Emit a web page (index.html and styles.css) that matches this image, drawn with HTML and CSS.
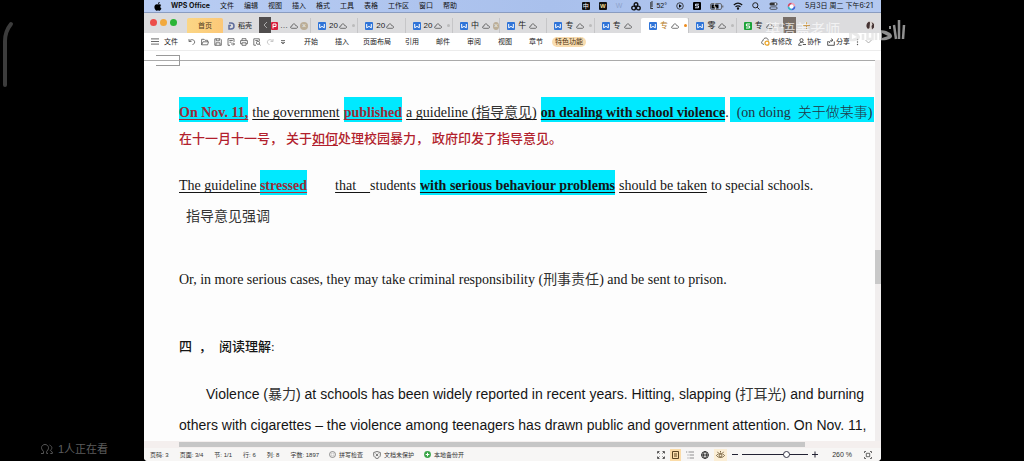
FILE: index.html
```html
<!DOCTYPE html>
<html lang="zh-CN">
<head>
<meta charset="utf-8">
<title>WPS Office</title>
<link rel="stylesheet" href="styles.css">
</head>
<body>
<svg class="defs" aria-hidden="true">
  <symbol id="w" viewBox="0 0 8 8"><rect width="8" height="8" rx="1" fill="#2f74d8"/><path d="M1.7 2v3.8L4 4.4l2.3 1.4V2" fill="none" stroke="#fff"/></symbol>
  <symbol id="s" viewBox="0 0 8 8"><rect width="8" height="8" rx="1" fill="#1aa237"/><path d="M6 2H2.4v2h3.2v2H2" fill="none" stroke="#fff"/></symbol>
  <symbol id="cloud" viewBox="0 0 8 6"><path d="M1.8 5.3C-.2 5.2.2 3 2 3.2 2.200.2 5.400 .2 5.700 2.700 8.200 2.700 8 5.300 6.300 5.300Z" fill="none" stroke="#555" stroke-width=".8"/></symbol>
</svg>
<div class="stage">
  <aside class="side">
    <svg class="arc" viewBox="0 0 14 68" aria-hidden="true"><path d="M11 3C7 8 5 14 5 20V64" fill="none" stroke="#3c3c3c" stroke-width="4" stroke-linecap="round"/></svg>
    <p class="viewers"><svg width="14" height="12" viewBox="0 0 14 12" fill="none" stroke="#555" aria-hidden="true"><path d="M1 10.500h2.500V8.300C-.3 5 2 1.500 5 1.500s5.300 3.500 1.700 6.800v2.200H8M9.500 2c3 1.500 3 3.500.8 5.500l2 1.500v1.500h-2"/></svg>1人正在看</p>
  </aside>

  <main class="window">
    <nav class="menubar">
      <svg class="apple" width="8" height="9" viewBox="0 0 8 9" aria-hidden="true"><path d="M5.800 0C4.500.2 3.900 1 4 2 5.100 1.900 5.800 1 5.800 0ZM4 2.500C3 2 1.900 2 1.100 2.900-.3 4.600.6 7.400 2 8.500c.8.5 1.300 0 2 0s1.200.5 2 0c.7-.5 1.200-1.300 1.500-2C6 5.800 6 3.800 7.200 3.100 6.400 2 5 2 4 2.500Z"/></svg>
      <button class="app">WPS Office</button>
      <button>文件</button><button>编辑</button><button>视图</button><button>插入</button><button>格式</button><button>工具</button><button>表格</button><button>工作区</button><button>窗口</button><button>帮助</button>
      <div class="tray">
        <span class="badge">中</span>
        <span class="badge gold">W</span>
        <span class="faint">W</span>
        <svg width="10" height="9" viewBox="0 0 10 9" fill="none" stroke="#111" stroke-width="1.400"><circle cx="5" cy="2.600" r="1.800"/><circle cx="2.700" cy="6" r="1.900"/><circle cx="7.300" cy="6" r="1.900"/></svg>
        <span class="temp"><svg width="4" height="9" viewBox="0 0 4 9" fill="none" stroke="#333"><path d="M1 1h2M1 3h2M1 5h2M1 7.500h2M.8 1v7"/></svg>52°</span>
        <svg width="8" height="8" viewBox="0 0 8 8"><circle cx="4" cy="4" r="3.300" fill="none" stroke="#222" stroke-width=".8"/><path d="M3 2.300 5.800 4 3 5.700Z"/></svg>
        <svg width="8" height="8" viewBox="0 0 8 8"><rect width="8" height="8" rx="1"/><path d="M6 2.200H2.500v1.700h3v1.900H2" fill="none" stroke="#dce6fa"/></svg>
        <svg width="14" height="7" viewBox="0 0 14 7"><rect x=".5" y=".5" width="11" height="6" rx="1.500" fill="none" stroke="#555" stroke-width=".8"/><rect x="1.500" y="1.500" width="7" height="4"/><path d="M5 0 4 4h2L5 7" fill="none" stroke="#fff" stroke-width=".7"/><path d="M12.800 2.500v2" stroke="#555"/></svg>
        <svg width="10" height="8" viewBox="0 0 10 8" fill="none" stroke="#111" stroke-width="1.200"><path d="M.8 3C3.500.5 6.500.5 9.200 3M2.500 4.800c1.800-1.500 3.200-1.500 5 0"/><circle cx="5" cy="6.500" r=".6"/></svg>
        <svg width="8" height="8" viewBox="0 0 8 8" fill="none" stroke="#222"><circle cx="3.300" cy="3.300" r="2.600"/><path d="M5.200 5.200 7.500 7.500"/></svg>
        <svg width="9" height="8" viewBox="0 0 9 8"><rect x=".5" y=".5" width="8" height="3" rx="1.500" fill="#333"/><circle cx="6.500" cy="2" r="1" fill="#dce6fa"/><rect x=".9" y="4.900" width="7.200" height="2.400" rx="1.200" fill="none" stroke="#333" stroke-width=".8"/></svg>
        <svg width="9" height="9" viewBox="0 0 9 9" fill="none" stroke-width="1.600"><path d="M4.500 1.500a3 3 0 0 1 3 3" stroke="#f5a0b0"/><path d="M7.500 4.500a3 3 0 0 1-3 3" stroke="#3b62d8"/><path d="M4.500 7.500a3 3 0 0 1-3-3" stroke="#31b8c2"/><path d="M1.500 4.500a3 3 0 0 1 3-3" stroke="#d9415d"/><circle cx="4.500" cy="4.500" r="2" fill="#fff" stroke="none"/></svg>
        <time>5月3日 周二 下午6:21</time>
      </div>
    </nav>

    <div class="tabs">
      <div class="lights"><i class="close-light"></i><i class="min-light"></i><i class="max-light"></i></div>
      <button class="home">首页</button>
      <button class="docer"><svg width="7" height="8" viewBox="0 0 7 8" fill="none" stroke="#5f6c9c" stroke-width="1.500"><path d="M1 1h2c4 0 4 6 0 6H1V3.500h2"/></svg>稻壳</button>
      <button class="back" aria-label="向左滚动"><svg width="5" height="8" viewBox="0 0 5 8" fill="none" stroke="#aaa"><path d="M4 1 1 4l3 3"/></svg></button>
      <button class="pdf"><svg width="7" height="8" viewBox="0 0 7 8"><rect width="7" height="8" rx="1" fill="#d9203e"/><path d="M2 6.500V2h3v2.500H2" fill="none" stroke="#fff"/></svg>…<svg class="cl"><use href="#cloud"/></svg><i class="close">×</i></button>
      <div class="strip">
        <button><svg class="ic"><use href="#w"/></svg>20<svg class="cl near"><use href="#cloud"/></svg><i class="dot"></i></button>
        <button><svg class="ic"><use href="#w"/></svg>20<svg class="cl near"><use href="#cloud"/></svg></button>
        <button><svg class="ic"><use href="#w"/></svg>20<svg class="cl near"><use href="#cloud"/></svg><i class="dot"></i></button>
        <button><svg class="ic"><use href="#w"/></svg>中<svg class="cl"><use href="#cloud"/></svg><i class="close">×</i></button>
        <button><svg class="ic"><use href="#w"/></svg>牛<svg class="cl"><use href="#cloud"/></svg></button>
        <button><svg class="ic"><use href="#w"/></svg>专<svg class="cl"><use href="#cloud"/></svg><i class="dot"></i></button>
        <button><svg class="ic"><use href="#w"/></svg>专<svg class="cl"><use href="#cloud"/></svg></button>
        <button class="active"><svg class="ic"><use href="#w"/></svg>专<svg class="cl"><use href="#cloud"/></svg><i class="dot"></i></button>
        <button><svg class="ic"><use href="#w"/></svg>零<svg class="cl"><use href="#cloud"/></svg><i class="dot"></i></button>
        <button><svg class="ic"><use href="#s"/></svg>专<svg class="cl"><use href="#cloud"/></svg><i class="dot"></i></button>
      </div>
      <button class="next" aria-label="向右滚动"><svg width="5" height="8" viewBox="0 0 5 8" fill="none" stroke="#a98c5c"><path d="m1 1 3 3-3 3"/></svg></button>
      <button class="plus" aria-label="新建"><svg width="7" height="7" viewBox="0 0 7 7" stroke="#c99b53"><path d="M3.500 0v7M0 3.500h7"/></svg></button>
      <svg class="avatar" width="9" height="9" viewBox="0 0 9 9"><circle cx="4.500" cy="4.500" r="4.300" fill="#ddd6d2"/><path d="M1 2.500C2.500.3 4 .5 4 2L3.500 7 2 8C.3 6.500 0 4.500 1 2.500ZM5.500 1 8 3v3.500L6 8.500 5.500 5l1-1.500Z" fill="#433"/></svg>
    </div>

    <div class="toolbar">
      <button class="file"><svg width="8" height="7" viewBox="0 0 8 7" stroke="#444" stroke-width=".8"><path d="M0 .9h8M0 3.500h8M0 6.100h8"/></svg>文件</button>
      <div class="quick">
        <svg viewBox="0 0 8 8"><path d="M1 1v2.500h2.500M1.200 3.200C3 .5 7.500 1.500 6.500 5L4.500 7"/></svg>
        <svg viewBox="0 0 8 8"><path d="M.6 6.800V1.300h2.500l1 1h2.500v1.500M.6 6.800 2 3.800h5.500L6.600 6.800Z"/></svg>
        <svg viewBox="0 0 8 8"><path d="M.8.8h5.500l1 1v5.500H.8ZM2.300.8v2h3v-2M2 7.200V4.800h4v2.400"/></svg>
        <svg viewBox="0 0 8 8"><path d="M7 4V.7H1v6.600h2M2.300 2.500h3.500M2.500 4.200h2M4 6h3.500M6 4.500 7.500 6 6 7.500"/></svg>
        <svg viewBox="0 0 8 8"><path d="M2 2.500V.7h4v1.800M2 5.800H.6V2.600h6.800v3.200H6M2 4.800h4v2.500H2Z"/></svg>
        <svg viewBox="0 0 8 8"><path d="M3 7.200H.8V.8h5.500V3M2.300 2.500h2.500"/><circle cx="5" cy="4.800" r="1.600"/><path d="m6.200 6 1.400 1.500"/></svg>
        <svg class="off" viewBox="0 0 8 8"><path d="M7 1v2.500H4.500M6.800 3.200C5 .5.500 1.500 1.500 5l2 2"/></svg>
        <svg viewBox="0 0 8 8"><path d="M2 2.500h4M2.200 4.300 4 6l1.800-1.700Z"/></svg>
      </div>
      <div class="ribbon"><button>开始</button><button>插入</button><button class="wide">页面布局</button><button>引用</button><button>邮件</button><button>审阅</button><button>视图</button><button>章节</button></div>
      <button class="pill">特色功能</button>
      <div class="actions">
        <button><svg width="9" height="9" viewBox="0 0 9 9" fill="none" stroke="#444" stroke-width=".8"><path d="M3 7.500C-.2 7 .2 4 2 3.800 2.500 0 7 .2 7.300 3.500"/><circle cx="6" cy="6.200" r="2" fill="#fff" stroke="#e8a020" stroke-width="1.200"/></svg>有修改</button>
        <button><svg width="8" height="8" viewBox="0 0 8 8" fill="none" stroke="#444" stroke-width=".9"><circle cx="3.500" cy="2.200" r="1.600"/><path d="M.6 7.300C.8 4 5 3.500 5.800 5M.6 7.300h3M4.800 6.500H8"/></svg>协作</button>
        <button><svg width="8" height="8" viewBox="0 0 8 8" fill="none" stroke="#444" stroke-width=".9"><path d="M1.700 3.500H.7v3.800h6.600V3.500M2.500 5C2.500 3 3.500 2.200 5.500 2.200M4.300.7 6 2.200 4.300 3.700"/></svg>分享</button>
        <button aria-label="更多"><svg width="3" height="8" viewBox="0 0 3 8" fill="#555"><circle cx="1.500" cy="1.500" r=".7"/><circle cx="1.500" cy="4" r=".7"/><circle cx="1.500" cy="6.500" r=".7"/></svg></button>
        <button aria-label="收起"><svg width="7" height="5" viewBox="0 0 7 5" fill="none" stroke="#999" stroke-width=".8"><path d="m.5 1 3 3 3-3"/></svg></button>
      </div>
    </div>

    <div class="margin-strip"><i></i></div>

    <div class="body">
      <article class="doc">
        <p class="line tall"><b class="hl red u">On Nov. 11,</b><span class="u">the government</span><b class="hl red u">published</b><span class="u">a guideline (<span class="cjk">指导意见</span>)</span><span class="pair"><b class="hl u">on dealing with school violence</b>.</span><span class="hl note"><span>(on doing</span><span>关于做某事)</span></span></p>
        <p class="line zh"><span>在十一月十一号，</span><span>关于<span class="u">如何</span>处理校园暴力，</span><span>政府印发了指导意见。</span></p>
        <p class="line tall second"><span class="pair"><span class="u">The guideline </span><b class="hl red u ured">stressed</b></span><span class="that"><span class="u">that &nbsp; &nbsp;</span>students</span><b class="hl u">with serious behaviour problems</b><span class="u">should be taken</span><span>to special schools.</span></p>
        <p class="line emph cjk">指导意见强调</p>
        <p class="line or">Or, in more serious cases, they may take criminal responsibility (<span class="cjk">刑事责任</span>) and be sent to prison.</p>
        <h2 class="line"><span>四</span><span>，</span><span>阅读理解:</span></h2>
        <div class="passage">
          <p class="indent">Violence (<span class="cjk">暴力</span>) at schools has been widely reported in recent years. Hitting, slapping (<span class="cjk">打耳光</span>) and burning</p>
          <p>others with cigarettes – the violence among teenagers has drawn public and government attention. On Nov. 11,</p>
        </div>
      </article>
      <div class="vscroll"><i></i></div>
    </div>

    <div class="hscroll"><i></i></div>

    <footer class="status">
      <div class="facts"><span>页码: 3</span><span>页面: 3/4</span><span>节: 1/1</span><span>行: 6</span><span>列: 8</span><span>字数: 1897</span></div>
      <div class="checks">
        <span><svg width="7" height="7" viewBox="0 0 7 7" fill="none" stroke="#777" stroke-width=".8"><circle cx="3.500" cy="3.500" r="3"/><circle cx="3.500" cy="3.500" r="1.500" stroke="#bbb"/></svg>拼写检查</span>
        <span><svg width="8" height="8" viewBox="0 0 8 8" fill="none" stroke="#555" stroke-width=".8"><path d="M4 .5 7.300 1.500v3C7 6 5.500 7 4 7.600 2.500 7 1 6 .7 4.500v-3ZM2.700 2.500l2.600 2.800M5.300 2.500 2.700 5.300"/></svg>文档未保护</span>
        <span><svg width="7" height="7" viewBox="0 0 7 7"><circle cx="3.500" cy="3.500" r="3.400" fill="#3aa548"/><path d="M3.500 1.700v3.600M1.700 3.500h3.600" stroke="#fff"/></svg>本地备份开</span>
      </div>
      <div class="views">
        <button aria-label="全屏"><svg width="8" height="8" viewBox="0 0 8 8" fill="none" stroke="#333"><path d="M.5 2.500v-2h2M5.500.5h2v2M7.500 5.500v2h-2M2.500 7.500h-2v-2M1 1l1.500 1.500M7 1 5.500 2.500M1 7l1.500-1.500M7 7 5.500 5.500" stroke-width=".8"/></svg></button>
        <button class="on" aria-label="页面视图"><svg width="7" height="8" viewBox="0 0 7 8" fill="none" stroke="#5b4420"><path d="M.5.5h6v7h-6ZM2 3h3M2 5h3"/></svg></button>
        <button aria-label="大纲"><svg width="8" height="8" viewBox="0 0 8 8" stroke="#777" stroke-width=".8"><path d="M0 1h1.200M2.500 1H8M1.500 4h1M3.500 4H8M1.500 7h1M3.500 7H8"/></svg></button>
        <button aria-label="网页视图"><svg width="8" height="8" viewBox="0 0 8 8" fill="none" stroke="#222"><circle cx="4" cy="4" r="3.400"/><ellipse cx="4" cy="4" rx="1.500" ry="3.400" stroke-width=".8"/><path d="M.6 4h6.800"/></svg></button>
        <button class="on eye" aria-label="护眼模式"><svg width="9" height="8" viewBox="0 0 9 8" fill="none" stroke="#5b4420" stroke-width=".8"><path d="M.5 4.500C2.500 1.800 6.500 1.800 8.500 4.500 6.500 7.200 2.500 7.200.5 4.500ZM4.500 0v1.500M1.500.8l.8 1.200M7.500.8l-.8 1.200"/><circle cx="4.500" cy="4.500" r="1.300"/></svg></button>
        <button aria-label="缩小"><svg width="6" height="8" viewBox="0 0 6 8" stroke="#223"><path d="M0 3.500h6"/></svg></button>
        <input type="range" min="0" max="100" value="70" aria-label="缩放">
        <button aria-label="放大"><svg width="6" height="8" viewBox="0 0 6 8" stroke="#223"><path d="M0 3.500h6M3 .5v6"/></svg></button>
        <output>260 %</output>
        <button aria-label="适应页面"><svg width="8" height="8" viewBox="0 0 8 8" fill="none" stroke="#444" stroke-width=".8"><path d="M.5 2V.5H2M6 .5h1.500V2M7.500 6v1.500H6M2 7.500H.5V6M2.300 2.300h3.400v3.400H2.300Z"/></svg></button>
      </div>
    </footer>
  </main>

  <div class="watermark"><span>英语盖老师</span>
    <svg width="58" height="26" viewBox="0 0 58 26" aria-hidden="true"><path d="M1 14v10c6 1 11-1 11-4s-5-6-11-6ZM4 17l5 3-5 2ZM31 13v10c7 1 13-1 13-4s-6-6-13-6ZM34 16l6 3-6 2Z" fill="#dedede" fill-rule="evenodd"/><path d="M15 17v6M19.500 16v6h5v-6M28 16v7M46 8l2 14M51 3v19M56 8l-1 14" fill="none" stroke="#dedede" stroke-width="2.500"/><path d="M15 13v2M28 11v3M42 9v3" stroke="#dedede" stroke-width="2"/></svg>
  </div>
</div>
</body>
</html>
```
FILE: styles.css
```css
* { box-sizing: border-box; }
body {
  margin: 0;
  background: #000;
  font-family: "Liberation Sans", "Noto Sans CJK SC", sans-serif;
  color: #222;
}
p, h2 { margin: 0; font-weight: 400; }
button {
  border: 0; padding: 0; background: none; color: inherit;
  font: inherit; white-space: nowrap;
  display: flex; align-items: center;
}
svg { flex: none; display: block; }
.defs { position: absolute; width: 0; height: 0; }

.stage {
  position: relative;
  display: grid;
  grid-template-columns: minmax(0, 144fr) minmax(0, 737fr) minmax(0, 143fr);
  min-height: 100vh;
}
.side { display: flex; flex-direction: column; justify-content: space-between; padding-top: 21px; }
.arc { width: 14px; height: 68px; }
.viewers {
  display: flex; align-items: center; gap: 4px;
  padding: 0 0 5px 40px;
  color: #5c5c5c; font-size: 11px; line-height: 14px;
}

.window {
  display: flex; flex-direction: column;
  background: #fdfdfd;
  border-radius: 0 0 4px 4px;
  overflow: hidden;
  font-size: 7px; line-height: 10px;
}

/* system menu bar */
.menubar {
  display: flex; align-items: center; gap: 10px;
  height: 12px; padding: 0 8px 0 10px;
  background: linear-gradient(90deg, #b9cdf3, #a9c0ec 55%, #b4c9f0);
  color: #111;
}
.app { font-family: Inter, sans-serif; font-weight: 700; }
.apple { margin-right: -1px; }
.tray { display: flex; align-items: center; gap: 9px; margin-left: auto; }
.tray time { font-family: Inter, "Noto Sans CJK SC", sans-serif; }
.badge { width: 8px; height: 8px; border-radius: 1px; background: #111; color: #fff; font-size: 6px; line-height: 8px; text-align: center; }
.gold { color: #f3dd9a; font-weight: 700; }
.faint { color: #8fa3cc; }
.temp { display: flex; gap: 2px; }

/* document tabs */
.tabs {
  display: flex; align-items: stretch;
  height: 21px; padding-top: 5px;
  background: #dcdcde;
  border-top: 1px solid #8a9cc0;
}
.lights { display: flex; gap: 3px; padding: 1px 10px 0 6px; }
.lights i { width: 7px; height: 7px; border-radius: 50%; }
.close-light { background: #ec4d48; }
.min-light { background: #f2a93c; }
.max-light { background: #2bb536; }
.home { width: 36px; justify-content: center; background: linear-gradient(90deg, #fbd685, #fcc878); color: #4b3a1c; border-radius: 2px 2px 0 0; }
.docer { width: 36px; padding-left: 5px; gap: 3px; }
.back, .next { width: 12px; justify-content: center; background: #504d4d; margin-top: -1px; }
.next { width: 13px; background: #776e68; }
.pdf { width: 39px; gap: 2px; font-size: 8px; }
.strip { flex: 1; display: flex; min-width: 0; }
.strip button {
  flex: 1; min-width: 0; gap: 3px; padding-left: 7px; font-size: 8px;
  border-left: 1px solid #c6c6c8;
}
.strip .active { background: #fff; border-color: #fff; color: #b57a1c; border-radius: 2px 2px 0 0; }
.ic { width: 8px; height: 8px; }
.cl { width: 8px; height: 6px; }
.near { margin-left: -2px; }
.dot { width: 3px; height: 3px; border-radius: 50%; background: #bbb; margin-left: 2px; }
.active .dot { background: #ee8c1e; }
.close { width: 8px; height: 8px; border-radius: 50%; background: #bbae98; color: #eee; font: 7px/8px "Liberation Sans", sans-serif; text-align: center; }
.plus { padding: 0 56px 0 7px; }
.avatar { align-self: center; margin-right: 6px; }

/* toolbar */
.toolbar { display: flex; align-items: center; height: 18px; padding: 0 9px 0 7px; background: #fff; border-bottom: 1px solid #ececec; }
.file { gap: 5px; }
.quick { display: flex; gap: 5px; margin: 0 17px 0 10px; }
.quick svg { width: 8px; height: 8px; fill: none; stroke: #555; stroke-width: .8; }
.quick .off { stroke: #bbb; }
.ribbon { display: flex; gap: 17px; }
.ribbon .wide { margin: 0 -3px; }
.pill { height: 10px; padding: 0 3px; margin-left: 9px; border-radius: 5px; background: #f9ddb0; color: #4b3210; }
.actions { display: flex; align-items: center; gap: 6px; margin-left: auto; }
.actions button { gap: 1px; }

.margin-strip { height: 15px; margin-bottom: -6px; padding: 4px 0 0 12px; background: linear-gradient(#fff 9px, #aaa 9px, #aaa 10px, #fff 10px); }
.margin-strip i { display: block; width: 24px; height: 11px; border: 1px solid #999; border-left: 0; }

/* page */
.body { flex: 1; display: flex; min-height: 0; }
.doc {
  flex: 1; min-width: 0; padding: 37px 0 0 35px;
  font-family: "Liberation Serif", "Noto Sans CJK SC", serif;
  font-size: 14px; line-height: 18px; color: #151515;
  white-space: nowrap; overflow: hidden;
}
.line { display: flex; gap: 4px; }
.tall { height: 25px; align-items: flex-end; }
.hl { display: inline-block; padding-top: 7px; background: #00e9ff; }
.u { text-decoration: underline 1px; text-underline-offset: 2px; text-decoration-skip-ink: none; }
.red { color: #9c2c38; }
.ured { text-decoration-color: #b3303c; }
.cjk { color: #333; }
.note { display: flex; gap: 7px; padding: 7px 2px 0 7px; margin-left: -3px; color: #234; font-weight: 300; }
.zh { margin-top: 8px; gap: 3px; font-size: 13px; line-height: 18px; color: #b21f2d; font-weight: 500; }
.second { margin-top: 22px; }
.that { margin-left: 24px; }
.emph { margin: 13px 0 0 7px; }
.or { margin-top: 45px; display: block; }
h2.line { margin-top: 49px; gap: 7px; font-size: 13px; font-weight: 500; }
.passage {
  margin-top: 23px;
  font-family: "Liberation Sans", "Noto Sans CJK SC", sans-serif;
  font-size: 14px; line-height: 31px;
}
.indent { padding-left: 27px; }

.vscroll { width: 6px; padding-top: 190px; background: #f1eeee; }
.vscroll i { display: block; height: 34px; background: #c9c9c9; }
.hscroll { height: 7px; padding: 1px 76px 1px 35px; background: #f4efee; }
.hscroll i { display: block; height: 5px; background: #c6c6c6; }

/* status bar */
.status { display: flex; align-items: center; height: 13px; padding: 0 9px 0 6px; background: #f7f6f5; font-size: 6px; color: #333; }
.facts { display: flex; gap: 11px; }
.checks { display: flex; gap: 10px; margin-left: 10px; }
.checks span { display: flex; align-items: center; gap: 3px; }
.views { display: flex; align-items: center; gap: 7px; margin-left: auto; }
.views .on { background: #fbdca8; padding: 2px; margin: 0 -2px; }
.views .eye { background: #fbeed5; }
.views output { margin: 0 5px 0 7px; font-size: 7px; }
input[type=range] { appearance: none; width: 66px; height: 8px; margin: 0 -3px; background: linear-gradient(transparent 3px, #223 3px, #223 4px, transparent 4px); }
input[type=range]::-webkit-slider-thumb { appearance: none; width: 7px; height: 7px; border: 1px solid #334; border-radius: 50%; background: #fff; }

/* stream overlay */
.watermark {
  position: absolute; top: 17px; right: 11.500%;
  display: flex; align-items: center; gap: 8px;
  color: #fff; font-size: 15px; line-height: 18px; opacity: .65;
}
```
